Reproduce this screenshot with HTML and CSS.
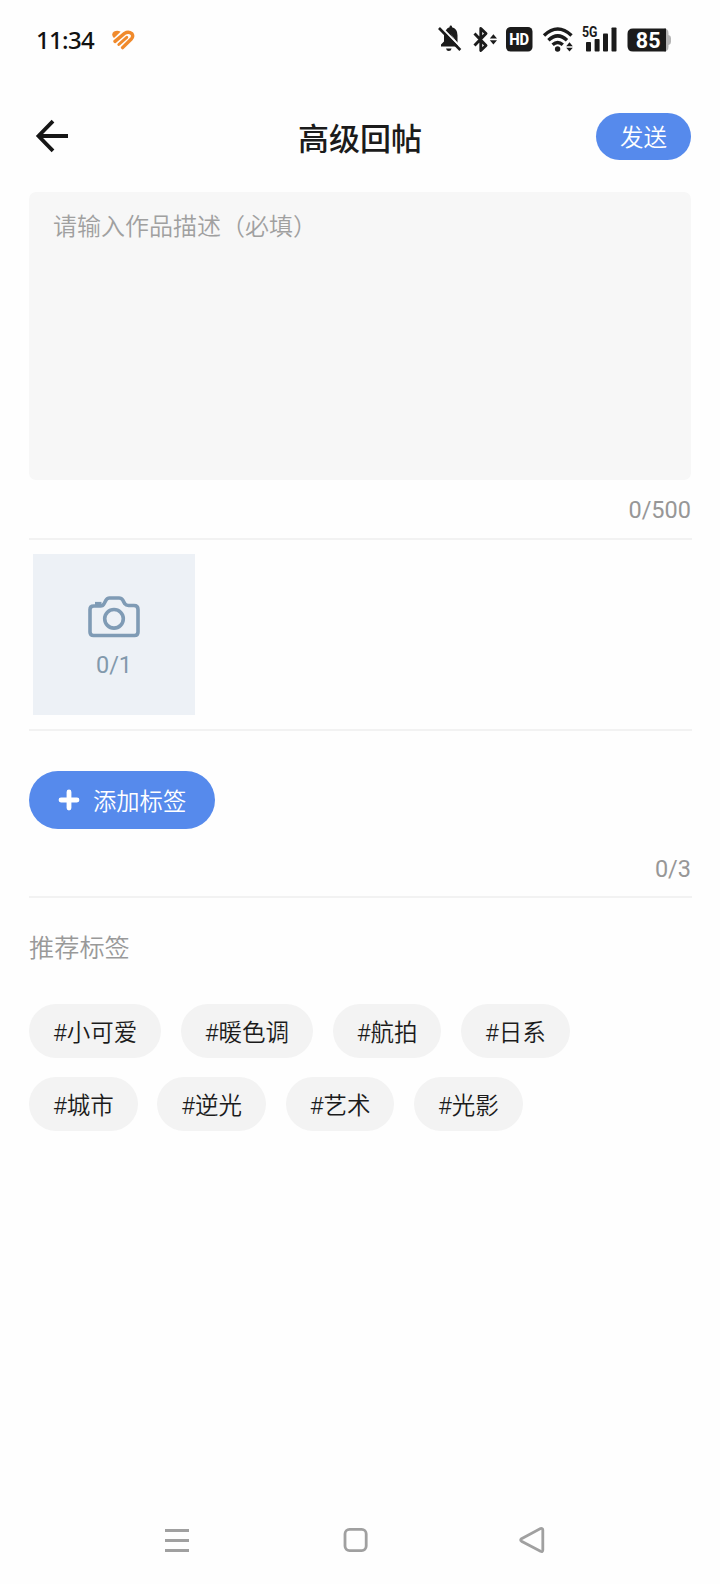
FILE: index.html
```html
<!DOCTYPE html>
<html lang="zh-CN">
<head>
<meta charset="utf-8">
<title>高级回帖</title>
<link rel="stylesheet" href="styles.css">
</head>
<body>
<div class="screen">
  <div class="status">
    <span class="time">11:34</span>
    <svg class="heart" width="24" height="20" viewBox="0 0 24 20" fill="none" stroke="#f08a2c" stroke-linecap="round" stroke-width="3.400">
      <path d="M2.400 7.400Q-.2 3.800 3 1.600Q6.400-.4 9.600 1.800L3.600 7.400Q3 7.900 2.400 7.400Z" fill="#f08a2c" stroke="none"/>
      <path d="M4 11.400L13.500 3.400Q17.500.9 20.800 3.600Q22.800 6.400 20.300 9L11.600 17.600"/>
      <path d="M7.800 14.500L15.800 7.300" stroke-width="2.900"/>
    </svg>
    <svg class="icons" width="240" height="30" viewBox="434 24 240 30" fill="#1b1b1b">
      <path d="M441 46.500v-2l3-3v-6q0-4.400 3.500-7l11 18zM447 28.500q1.400-1 2.600-1.300v-.5q0-1.200 1.200-1.200t1.200 1.200v.5q5.500 1.500 5.500 8v8zM446 48.500h5.600q-.5 2.600-2.800 2.600t-2.800-2.600z"/>
      <path d="M440.500 26.500L462 48.500" stroke="#fefefe" stroke-width="2"/>
      <path d="M439 28L460.300 50" stroke="#1b1b1b" stroke-width="2.600"/>
      <path d="M474.500 33.500L486 45.500L480.800 50.500V28.500L486 33.500L474.500 45.500" fill="none" stroke="#1b1b1b" stroke-width="2.900" stroke-linejoin="round"/>
      <path d="M493.400 34.200l3.600 4.200h-7.200zM493.400 44.400l3.600-4.200h-7.200z"/>
      <rect x="506" y="27" width="26.500" height="24.500" rx="4.500"/>
      <text class="hd" x="519.200" y="45.400" text-anchor="middle" textLength="20" lengthAdjust="spacingAndGlyphs" fill="#fff">HD</text>
      <g fill="none" stroke="#1b1b1b" stroke-width="3.400">
        <path d="M544 35.500Q557.700 22.500 571.500 35.500"/>
        <path d="M548.400 40.300Q557.700 31.500 567 40.300"/>
        <path d="M552.600 44.800Q557.700 40.300 562.800 44.800"/>
      </g>
      <circle cx="557.600" cy="49" r="2.700"/>
      <path d="M569.500 42.300l3.300 4h-6.600zM569.500 51.500l3.300-3.800h-6.600z"/>
      <text class="net" x="582" y="37" textLength="15.500" lengthAdjust="spacingAndGlyphs">5G</text>
      <rect x="586" y="42" width="5" height="9.500" rx=".8"/>
      <rect x="594.600" y="39" width="5" height="12.500" rx=".8"/>
      <rect x="603" y="33.500" width="5" height="18" rx=".8"/>
      <rect x="611.500" y="27.500" width="5" height="24" rx=".8"/>
      <path d="M664 28.500q4.500 0 4.500 5v1.500q2.500.5 2.500 3v4q0 2.500-2.500 3v1.500q0 5-4.500 5z" fill="#b5b5b5"/>
      <path d="M633 28.500H666V51.500H633q-5.500 0-5.500-5.500V34q0-5.500 5.500-5.500z"/>
      <text class="bat" x="648.200" y="47.600" text-anchor="middle" fill="#fff">85</text>
    </svg>
  </div>

  <header class="bar">
    <svg width="34" height="34" viewBox="0 0 34 34" fill="none" stroke="#161616" stroke-width="3.800"><path d="M18 2.200L3.500 17L18 31.800M3 17H33"/></svg>
    <h1 class="title">高级回帖</h1>
    <div class="send">发送</div>
  </header>

  <main class="content">
    <div class="desc">请输入作品描述（必填）</div>
    <div class="count count-desc">0/500</div>
    <div class="photos">
      <div class="photo">
        <svg width="52" height="42" viewBox="0 0 52 42" fill="none" stroke="#7f9bb5" stroke-width="3.600" stroke-linejoin="round">
          <path d="M5.800 10H12.500Q15 10 16.200 7.500L18 4.200Q19.300 2 21.500 2H31Q33.500 2 34.800 4.200L36.800 7.800Q38 9.500 40.500 9.500H46Q50 9.500 50 13.500V36Q50 39.500 46.500 39.500H5.500Q2 39.500 2 36V13.500Q2 10 5.800 10Z"/>
          <circle cx="26" cy="22.800" r="9.300"/>
          <path d="M7 7.700H13.500"/>
        </svg>
        <span class="photo-count">0/1</span>
      </div>
    </div>
    <div class="add">
      <svg width="22" height="22" viewBox="0 0 22 22" stroke="#fff" stroke-width="4.800" stroke-linecap="round"><path d="M11 3V19M3 11H19"/></svg>
      <span class="add-label">添加标签</span>
    </div>
    <div class="count count-tags">0/3</div>
    <h2 class="subtitle">推荐标签</h2>
    <div class="tags">
      <span class="tag">#小可爱</span><span class="tag">#暖色调</span><span class="tag">#航拍</span><span class="tag">#日系</span>
      <span class="tag">#城市</span><span class="tag">#逆光</span><span class="tag">#艺术</span><span class="tag">#光影</span>
    </div>
  </main>

  <nav class="nav">
    <svg width="26" height="28" viewBox="0 0 26 28" fill="none" stroke="#a0a0a0" stroke-width="2.800"><path d="M1 4.500H25M1 14.500H25M1 24.500H25"/></svg>
    <svg width="26" height="28" viewBox="0 0 26 28" fill="none" stroke="#a0a0a0" stroke-width="2.800"><rect x="3" y="3.400" width="21.200" height="21.200" rx="4.500"/></svg>
    <svg width="26" height="28" viewBox="0 0 26 28" fill="none" stroke="#a0a0a0" stroke-width="2.800"><path d="M2.500 12.700L21.500 2.600Q23.800 2 23.800 4V24Q23.800 26.200 21.500 25.300L2.500 15.200Q.8 14 2.500 12.700Z"/></svg>
  </nav>
</div>
</body>
</html>
```

FILE: styles.css
```css
* { box-sizing: border-box; }

body {
  margin: 0;
  background: #fefefe;
  font-family: Roboto, "Noto Sans CJK SC", sans-serif;
  font-weight: 350;
  color: #1b1b1b;
}

.screen {
  width: 720px;
  height: 1584px;
  display: flex;
  flex-direction: column;
}

.status {
  height: 80px;
  padding: 0 46px 0 36px;
  display: flex;
  align-items: center;
}

.time {
  width: 75px;
  font: 550 24px/30px "Noto Sans", sans-serif;
  letter-spacing: -0.700px;
  color: #111;
}

.icons {
  margin-left: auto;
  margin-bottom: 2px;
}

.hd { font: 800 17px "Roboto", sans-serif; }
.net { font: 700 14.500px "Roboto", sans-serif; }
.bat { font: 700 21.500px "Roboto", sans-serif; }

.bar {
  height: 112px;
  padding: 0 29px 0 35px;
  display: grid;
  grid-template-columns: 89px 1fr 95px;
  align-items: center;
}

.title {
  margin: 8px 0 0;
  text-align: center;
  font-size: 31px;
  line-height: 44px;
  font-weight: 500;
}

.send {
  height: 47px;
  border-radius: 24px;
  background: #568aec;
  color: #fff;
  text-align: center;
  font-size: 23.500px;
  line-height: 50px;
}

.content { padding: 0 28px 0 29px; }

.desc {
  width: 662px;
  height: 288px;
  padding: 17px 24px;
  border-radius: 7px;
  background: #f7f7f7;
  color: #a0a0a0;
  font-size: 24px;
  line-height: 36px;
}

.count {
  padding-right: 1px;
  border-bottom: 2px solid #f2f2f2;
  text-align: right;
  color: #979797;
  font-size: 23.500px;
  font-weight: 400;
  line-height: 30px;
}

.count-desc { height: 60px; padding-top: 15px; }
.count-tags { height: 69px; padding-top: 25px; }

.photos {
  height: 191px;
  padding: 14px 4px;
  border-bottom: 2px solid #f2f2f2;
}

.photo {
  width: 162px;
  height: 161px;
  padding-top: 42px;
  background: #edf1f6;
  display: flex;
  flex-direction: column;
  align-items: center;
  gap: 11px;
}

.photo-count {
  color: #8299ac;
  font-size: 23.500px;
  font-weight: 400;
  line-height: 32px;
}

.add {
  width: 186px;
  height: 58px;
  margin-top: 40px;
  padding-left: 29px;
  border-radius: 29px;
  background: #568aec;
  color: #fff;
  display: flex;
  align-items: center;
  gap: 13px;
  font-size: 23.300px;
  line-height: 36px;
}

.add-label { padding-top: 3px; }

.subtitle {
  margin: 32px 0 0;
  color: #999;
  font-size: 25.200px;
  font-weight: 350;
  line-height: 38px;
}

.tags {
  width: 600px;
  margin-top: 36px;
  display: flex;
  flex-wrap: wrap;
  gap: 19px 19.700px;
}

.tag {
  height: 54px;
  padding: 0 24px;
  border-radius: 27px;
  background: #f3f3f3;
  font-size: 23.500px;
  line-height: 58px;
}

.nav {
  margin-top: auto;
  height: 88px;
  padding: 0 175px 0 164px;
  display: flex;
  justify-content: space-between;
  align-items: center;
}
```
